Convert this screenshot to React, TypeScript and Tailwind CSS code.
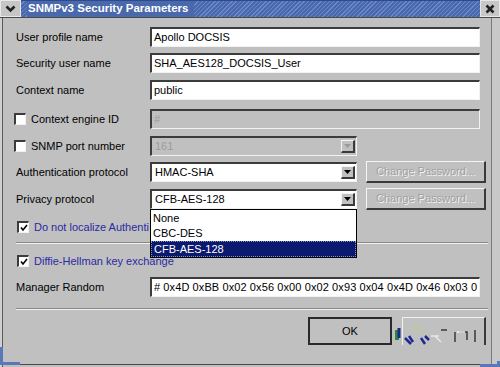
import React from "react";

const sunken =
  "border-t-2 border-l-2 border-b border-r border-t-[#3c3c3c] border-l-[#3c3c3c] border-b-[#f2f2f2] border-r-[#f2f2f2]";
const raised =
  "border-t border-l border-b-2 border-r-2 border-t-[#f4f4f4] border-l-[#f4f4f4] border-b-[#3a3a3a] border-r-[#3a3a3a]";

function Label({ children }: { children: React.ReactNode }) {
  return <div className="w-[134px] shrink-0 text-[11px] text-black leading-none">{children}</div>;
}

function TextInput({ value, disabled }: { value: string; disabled?: boolean }) {
  return (
    <div
      className={`w-[330px] h-[20px] flex items-center pl-[2px] text-[11px] leading-none ${sunken} ${
        disabled ? "bg-[#c0c0c0] text-[#9c9c9c]" : "bg-white text-black"
      }`}
    >
      {value}
    </div>
  );
}

function Arrow({ disabled }: { disabled?: boolean }) {
  return (
    <div className={`w-[14px] h-[13px] bg-[#c0c0c0] flex items-center justify-center ${raised}`}>
      <svg width="7" height="4" viewBox="0 0 7 4">
        <polygon points="0,0 7,0 3.5,4" fill={disabled ? "#9a9a9a" : "#000"} />
      </svg>
    </div>
  );
}

function Combo({ value, disabled, children }: { value: string; disabled?: boolean; children?: React.ReactNode }) {
  return (
    <div
      className={`relative w-[207px] h-[20px] flex items-center justify-between pl-[3px] pr-[1px] text-[11px] leading-none ${sunken} ${
        disabled ? "bg-[#c0c0c0] text-[#9c9c9c]" : "bg-white text-black"
      }`}
    >
      <span>{value}</span>
      <Arrow disabled={disabled} />
      {children}
    </div>
  );
}

function Check({ label }: { label: string }) {
  return (
    <div className="flex items-center h-[20px] pl-[14px]">
      <div className={`w-[12px] h-[12px] bg-white ${sunken} flex items-center justify-center`}>
        <svg width="8" height="8" viewBox="0 0 8 8">
          <path d="M1 3.5 L3 6 L7 1" stroke="#000" strokeWidth="1.6" fill="none" />
        </svg>
      </div>
      <span className="ml-[5px] text-[11px] text-[#2a2aa2] leading-none whitespace-nowrap">{label}</span>
    </div>
  );
}

function EmptyCheck({ label }: { label: string }) {
  return (
    <div className="flex items-center w-[134px] shrink-0">
      <div className={`w-[12px] h-[12px] bg-white ${sunken} -ml-[2px]`} />
      <span className="ml-[5px] text-[11px] text-black leading-none whitespace-nowrap">{label}</span>
    </div>
  );
}

function DisabledButton({ label }: { label: string }) {
  return (
    <div
      className={`w-[120px] h-[22px] ml-[9px] flex items-center justify-center bg-[#c0c0c0] text-[11px] text-[#a0a0a0] [text-shadow:1px_1px_0_#f4f4f4] ${raised}`}
    >
      {label}
    </div>
  );
}

function Separator() {
  return (
    <div className="ml-[13px] w-[472px] border-t border-b border-t-[#888888] border-b-[#f2f2f2]" />
  );
}

export default function App() {
  return (
    <div className="w-[500px] h-[367px] bg-[#c0c0c0] flex flex-col overflow-hidden font-['Liberation_Sans',Arial,sans-serif] select-none">
      {/* Title bar */}
      <div className="flex h-[18px] shrink-0 border-b border-[#4a4a4a]">
        <div className="w-[21px] h-full bg-[#c6c6c6] border border-[#e8e8e8] flex items-center justify-center">
          <svg width="11" height="8" viewBox="0 0 11 8">
            <path d="M1.5 1.5 L5.5 5.5 L9.5 1.5" stroke="#222" strokeWidth="2.6" fill="none" />
          </svg>
        </div>
        <div className="flex-1 h-full flex items-center pl-[6px] bg-[repeating-linear-gradient(135deg,#4a69ad_0px,#4a69ad_2px,#6a88c8_2px,#6a88c8_3px)] border-t border-[#2e4a8a]">
          <span className="text-white font-bold text-[11.5px] leading-none bg-[#4a69ad] pr-[6px] pl-[1px] h-full flex items-center">
            SNMPv3 Security Parameters
          </span>
        </div>
        <div className="w-[20px] h-full bg-[#c8c8c8] border border-[#e8e8e8] flex items-center justify-center">
          <svg width="10" height="10" viewBox="0 0 10 10">
            <path d="M1.5 1.5 L8.5 8.5 M8.5 1.5 L1.5 8.5" stroke="#222" strokeWidth="2.6" />
          </svg>
        </div>
      </div>

      {/* Body */}
      <div className="flex flex-1 relative">
        <div className="w-[2px] bg-[#d0d0d0]" />
        <div className="w-[1px] bg-[#5a5a5a]" />
        <div className="flex-1 flex flex-col pt-[9px] pl-[13px]">
          <div className="flex items-center h-[20px]">
            <Label>User profile name</Label>
            <TextInput value="Apollo DOCSIS" />
          </div>
          <div className="flex items-center h-[20px] mt-[6px]">
            <Label>Security user name</Label>
            <TextInput value="SHA_AES128_DOCSIS_User" />
          </div>
          <div className="flex items-center h-[20px] mt-[7px]">
            <Label>Context name</Label>
            <TextInput value="public" />
          </div>
          <div className="flex items-center h-[20px] mt-[9px]">
            <EmptyCheck label="Context engine ID" />
            <TextInput value="#" disabled />
          </div>
          <div className="flex items-center h-[20px] mt-[7px]">
            <EmptyCheck label="SNMP port number" />
            <Combo value="161" disabled />
          </div>
          <div className="flex items-center h-[22px] mt-[5px]">
            <Label>Authentication protocol</Label>
            <Combo value="HMAC-SHA" />
            <DisabledButton label="Change Password..." />
          </div>
          <div className="flex items-center h-[22px] mt-[5px] relative z-10">
            <Label>Privacy protocol</Label>
            <Combo value="CFB-AES-128">
              <div className="absolute left-[-2px] top-[18px] w-[207px] bg-white border border-black flex flex-col text-[11px] text-black leading-none">
                <div className="h-[16px] flex items-center pl-[2px]">None</div>
                <div className="h-[15px] flex items-center pl-[2px]">CBC-DES</div>
                <div className="h-[16px] flex items-center pl-[2px] bg-[#0b1a6e] text-white border border-dotted border-[#8890c0]">
                  CFB-AES-128
                </div>
              </div>
            </Combo>
            <DisabledButton label="Change Password..." />
          </div>
          <div className="mt-[7px] -ml-[13px]">
            <Check label="Do not localize Authenti" />
          </div>
          <div className="mt-[5px] -ml-[13px]">
            <Separator />
          </div>
          <div className="mt-[7px] -ml-[13px]">
            <Check label="Diffie-Hellman key exchange" />
          </div>
          <div className="flex items-center h-[20px] mt-[6px]">
            <Label>Manager Random</Label>
            <div
              className={`w-[330px] h-[20px] flex items-center pl-[2px] text-[11px] tracking-[0.1px] leading-none bg-white text-black overflow-hidden whitespace-nowrap ${sunken}`}
            >
              # 0x4D 0xBB 0x02 0x56 0x00 0x02 0x93 0x04 0x4D 0x46 0x03 0
            </div>
          </div>
          <div className="mt-[11px] -ml-[13px]">
            <Separator />
          </div>
          <div className="flex mt-[7px] pl-[292px]">
            <div
              className={`w-[84px] h-[28px] flex items-center justify-center bg-[#c0c0c0] text-[11px] text-black border-2 border-[#2a2a2a]`}
            >
              OK
            </div>
            <div className="relative w-[84px] h-[28px] ml-[10px] border-t border-l border-r-2 border-[#f0f0f0] border-r-[#3a3a3a]">
              <svg className="absolute -left-[8px] top-[6px]" width="90" height="24" viewBox="0 0 90 24">
                <path d="M2 6 L2 16" stroke="#2a8a3a" strokeWidth="4" />
                <path d="M4 4 L4 14" stroke="#1a2a90" strokeWidth="3" />
                <path d="M10 14 L16 20 M14 12 L18 18" stroke="#1a2a90" strokeWidth="2.5" />
                <path d="M18 4 Q26 2 28 10" stroke="#a8d860" strokeWidth="1" fill="none" />
                <path d="M26 14 L30 20 M30 12 L34 16" stroke="#1a2a90" strokeWidth="2.5" />
                <path d="M36 12 L44 12 M40 12 L46 18" stroke="#e8e8e8" strokeWidth="1.5" fill="none" />
                <path d="M46 6 L52 6 M60 8 L60 18 M64 8 L72 8 L72 16 M80 6 L80 18" stroke="#3a3a3a" strokeWidth="1.5" fill="none" />
                <path d="M62 8 L70 8" stroke="#f4f4f4" strokeWidth="1.5" />
              </svg>
            </div>
          </div>
        </div>
        <div className="w-[1px] bg-[#7a7a7a]" />
        <div className="w-[8px] bg-[#c8c8c8]" />
        {/* bottom border */}
        <div className="absolute left-0 right-0 bottom-[2px] h-[1px] bg-[#4a4a4a]" />
        <div className="absolute left-0 bottom-[2px] w-[20px] h-[18px] border-l-[3px] border-b-[3px] border-[#5a78b8]" />
        <div className="absolute right-0 bottom-0 w-[20px] h-[6px] border-r-[3px] border-b-[3px] border-[#5a78b8]" />
      </div>
    </div>
  );
}
